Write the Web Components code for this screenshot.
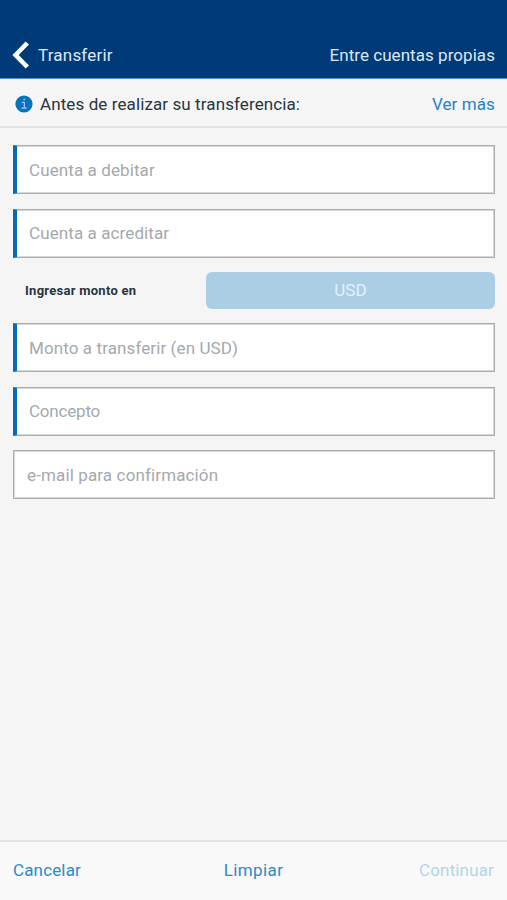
<!DOCTYPE html>
<html lang="es">
<head>
<meta charset="utf-8">
<title>Transferir</title>
<style>
  body{
    margin: 0;
    background-color: #f5f5f5;
    font-family: Roboto, "Liberation Sans", sans-serif;
    font-size: 17px;
    line-height: 20px;
  }
</style>
</head>
<body>
<transfer-page></transfer-page>
<script>
class PageHeader extends HTMLElement {
  constructor() {
    super();
    this.shadow = this.attachShadow({ mode: 'open' });
  }

  connectedCallback () {
    this.shadow.innerHTML =
    /*html*/`
    <style>
        :host{
            align-items: center;
            background-color: #003a79;
            border-bottom: 1px solid #4d94cc;
            box-sizing: border-box;
            color: #dce7f3;
            display: flex;
            height: 79px;
            justify-content: space-between;
            padding: 32px 12px 0;
        }

        .back{
            align-items: center;
            display: flex;
            gap: 8px;
        }

        svg{
            display: block;
            margin-top: -1px;
        }
    </style>
    <div class="back">
      <svg width="18" height="28" viewBox="0 0 18 28" fill="none" stroke="#fff" stroke-width="4.6">
        <path d="M15.3 2 3.6 14 15.3 26"/>
      </svg>
      <slot name="back"></slot>
    </div>
    <slot name="title"></slot>
 `;
  }
}

class InfoBar extends HTMLElement {
  constructor() {
    super();
    this.shadow = this.attachShadow({ mode: 'open' });
  }

  connectedCallback () {
    this.shadow.innerHTML =
    /*html*/`
    <style>
        :host{
            align-items: center;
            border-bottom: 2px solid #e2e2e2;
            box-sizing: border-box;
            color: #273640;
            display: flex;
            height: 49px;
            padding: 3px 12px 0 15px;
        }

        svg{
            display: block;
            margin: -1px 7px 0 0;
        }

        slot[name="link"]{
            color: #2482c5;
            display: block;
            margin-left: auto;
        }
    </style>
    <svg width="18" height="18" viewBox="0 0 18 18">
      <circle cx="9" cy="9" r="8.6" fill="#0872bd"/>
      <path d="M8.4 4.4h1.7M6.8 7.4h2.5v5.6M6.4 13.1h5.4" fill="none" stroke="#9ed0f2" stroke-width="1.2"/>
    </svg>
    <slot></slot>
    <slot name="link"></slot>
 `;
  }
}

class FormField extends HTMLElement {
  constructor() {
    super();
    this.shadow = this.attachShadow({ mode: 'open' });
  }

  connectedCallback () {
    this.shadow.innerHTML =
    /*html*/`
    <style>
        :host{
            align-items: center;
            background-color: #fff;
            border: 1px solid #acacac;
            box-shadow: inset 0 0 0 1px #d8d8d8;
            box-sizing: border-box;
            color: #a3a9ad;
            display: flex;
            height: 49px;
            padding: 0 13px;
        }

        :host([required]){
            border-left: 4px solid #0869b8;
            box-shadow: inset -1px 0 #d8d8d8, inset 0 1px #d8d8d8, inset 0 -1px #d8d8d8;
            padding-left: 12px;
        }
    </style>
    <slot></slot>
 `;
  }
}

class CurrencyRow extends HTMLElement {
  constructor() {
    super();
    this.shadow = this.attachShadow({ mode: 'open' });
  }

  connectedCallback () {
    this.shadow.innerHTML =
    /*html*/`
    <style>
        :host{
            display: grid;
            grid-template-columns: 193px 1fr;
            height: 36.5px;
        }

        .label{
            align-self: center;
            color: #273640;
            font-size: 13px;
            font-weight: 700;
            padding: 1px 0 0 12px;
        }

        button{
            background-color: #abcee4;
            border: none;
            border-radius: 6px;
            color: #e4f2fb;
            font: inherit;
            letter-spacing: inherit;
            padding: 0;
        }
    </style>
    <div class="label"><slot name="label"></slot></div>
    <button><slot></slot></button>
 `;
  }
}

class ActionBar extends HTMLElement {
  constructor() {
    super();
    this.shadow = this.attachShadow({ mode: 'open' });
  }

  connectedCallback () {
    this.shadow.innerHTML =
    /*html*/`
    <style>
        :host{
            align-items: center;
            background-color: #f9f9f9;
            border-top: 2px solid #e2e2e2;
            box-sizing: border-box;
            color: #2f89c5;
            display: grid;
            grid-template-columns: 1fr auto 1fr;
            height: 60px;
            padding: 0 13px 3px;
        }

        slot[name="next"]{
            color: #b3d5e8;
            display: block;
            text-align: right;
        }
    </style>
    <slot name="cancel"></slot>
    <slot name="clear"></slot>
    <slot name="next"></slot>
 `;
  }
}

class TransferPage extends HTMLElement {
  constructor() {
    super();
    this.shadow = this.attachShadow({ mode: 'open' });
  }

  connectedCallback () {
    this.shadow.innerHTML =
    /*html*/`
    <style>
        :host{
            display: flex;
            flex-direction: column;
            height: 900px;
        }

        span{
            letter-spacing: 0.1px;
            white-space: nowrap;
        }

        main{
            display: flex;
            flex: 1;
            flex-direction: column;
            gap: 14.5px;
            padding: 17px 12px 0 13px;
        }
    </style>
    <page-header>
      <span slot="back" style="letter-spacing: 0.2px">Transferir</span>
      <span slot="title" style="letter-spacing: 0.05px">Entre cuentas propias</span>
    </page-header>
    <info-bar>
      <span>Antes de realizar su transferencia:</span>
      <span slot="link">Ver más</span>
    </info-bar>
    <main>
      <form-field required><span>Cuenta a debitar</span></form-field>
      <form-field required><span>Cuenta a acreditar</span></form-field>
      <currency-row>
        <span slot="label" style="letter-spacing: 0.27px">Ingresar monto en</span>
        <span>USD</span>
      </currency-row>
      <form-field required><span>Monto a transferir (en USD)</span></form-field>
      <form-field required><span style="letter-spacing: -0.2px">Concepto</span></form-field>
      <form-field><span style="letter-spacing: 0.13px">e-mail para confirmación</span></form-field>
    </main>
    <action-bar>
      <span slot="cancel" style="letter-spacing: 0.15px">Cancelar</span>
      <span slot="clear" style="letter-spacing: 0.4px">Limpiar</span>
      <span slot="next" style="letter-spacing: 0.15px">Continuar</span>
    </action-bar>
 `;
  }
}

customElements.define('page-header', PageHeader);
customElements.define('info-bar', InfoBar);
customElements.define('form-field', FormField);
customElements.define('currency-row', CurrencyRow);
customElements.define('action-bar', ActionBar);
customElements.define('transfer-page', TransferPage);
</script>
</body>
</html>
